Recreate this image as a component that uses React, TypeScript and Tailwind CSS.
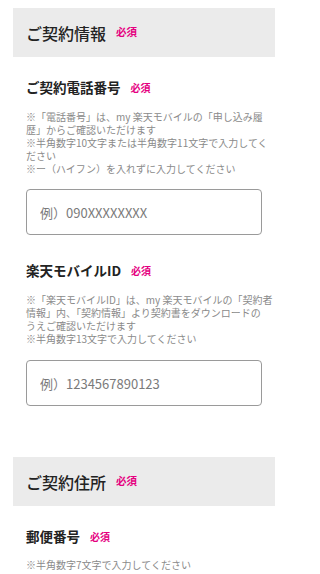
import React from "react";

const font = { fontFamily: '"Noto Sans CJK JP", "Noto Sans", sans-serif' };

function Required({ size = "text-[10px]" }: { size?: string }) {
  return <span className={`ml-[10px] ${size} font-bold leading-none text-[#e5007f]`}>必須</span>;
}

function SectionHeader({ title, className = "" }: { title: string; className?: string }) {
  return (
    <div className={`flex h-[49px] items-center bg-[#ebebeb] pl-[13px] ${className}`}>
      <h2 className="text-[16px] font-medium leading-none text-[#222]">{title}</h2>
      <Required size="text-[10.5px]" />
    </div>
  );
}

function FieldLabel({ label, className = "" }: { label: string; className?: string }) {
  return (
    <div className={`flex h-[20px] items-center ${className}`}>
      <h3 className="text-[13.5px] font-bold leading-none text-[#222]">{label}</h3>
      <Required />
    </div>
  );
}

// reference breaks lines at fixed points, keep them as given
function Notes({ lines, className = "" }: { lines: string[]; className?: string }) {
  return (
    <div className={`text-[10px] leading-[13px] text-[#8a8a8a] ${className}`}>
      {lines.map((l) => (
        <p key={l} className="whitespace-nowrap">
          {l}
        </p>
      ))}
    </div>
  );
}

function TextInput({ placeholder, className = "" }: { placeholder: string; className?: string }) {
  return (
    <input
      type="text"
      placeholder={placeholder}
      className={`block h-[46px] w-full rounded-[4px] border border-[#9a9a9a] bg-white px-[13px] text-[13px] text-[#333] outline-none placeholder:text-[#7a7a7a] ${className}`}
      style={font}
    />
  );
}

export default function App() {
  return (
    <div className="w-[288px] bg-white px-[13px] pt-[8px]" style={font}>
      <SectionHeader title="ご契約情報" />
      <div className="px-[13px]">
        <FieldLabel label="ご契約電話番号" className="mt-[21px]" />
        <Notes
          className="mt-[12px]"
          lines={[
            "※「電話番号」は、my 楽天モバイルの「申し込み履",
            "歴」からご確認いただけます",
            "※半角数字10文字または半角数字11文字で入力してく",
            "ださい",
            "※ー（ハイフン）を入れずに入力してください",
          ]}
        />
        <TextInput placeholder="例）090XXXXXXXX" className="mt-[14px]" />

        <FieldLabel label="楽天モバイルID" className="mt-[26px]" />
        <Notes
          className="mt-[12px]"
          lines={[
            "※「楽天モバイルID」は、my 楽天モバイルの「契約者",
            "情報」内、「契約情報」より契約書をダウンロードの",
            "うえご確認いただけます",
            "※半角数字13文字で入力してください",
          ]}
        />
        <TextInput placeholder="例）1234567890123" className="mt-[15px]" />
      </div>

      <SectionHeader title="ご契約住所" className="mt-[51px]" />
      <div className="px-[13px]">
        <FieldLabel label="郵便番号" className="mt-[21px]" />
        <Notes className="mt-[11px]" lines={["※半角数字7文字で入力してください"]} />
      </div>
    </div>
  );
}
